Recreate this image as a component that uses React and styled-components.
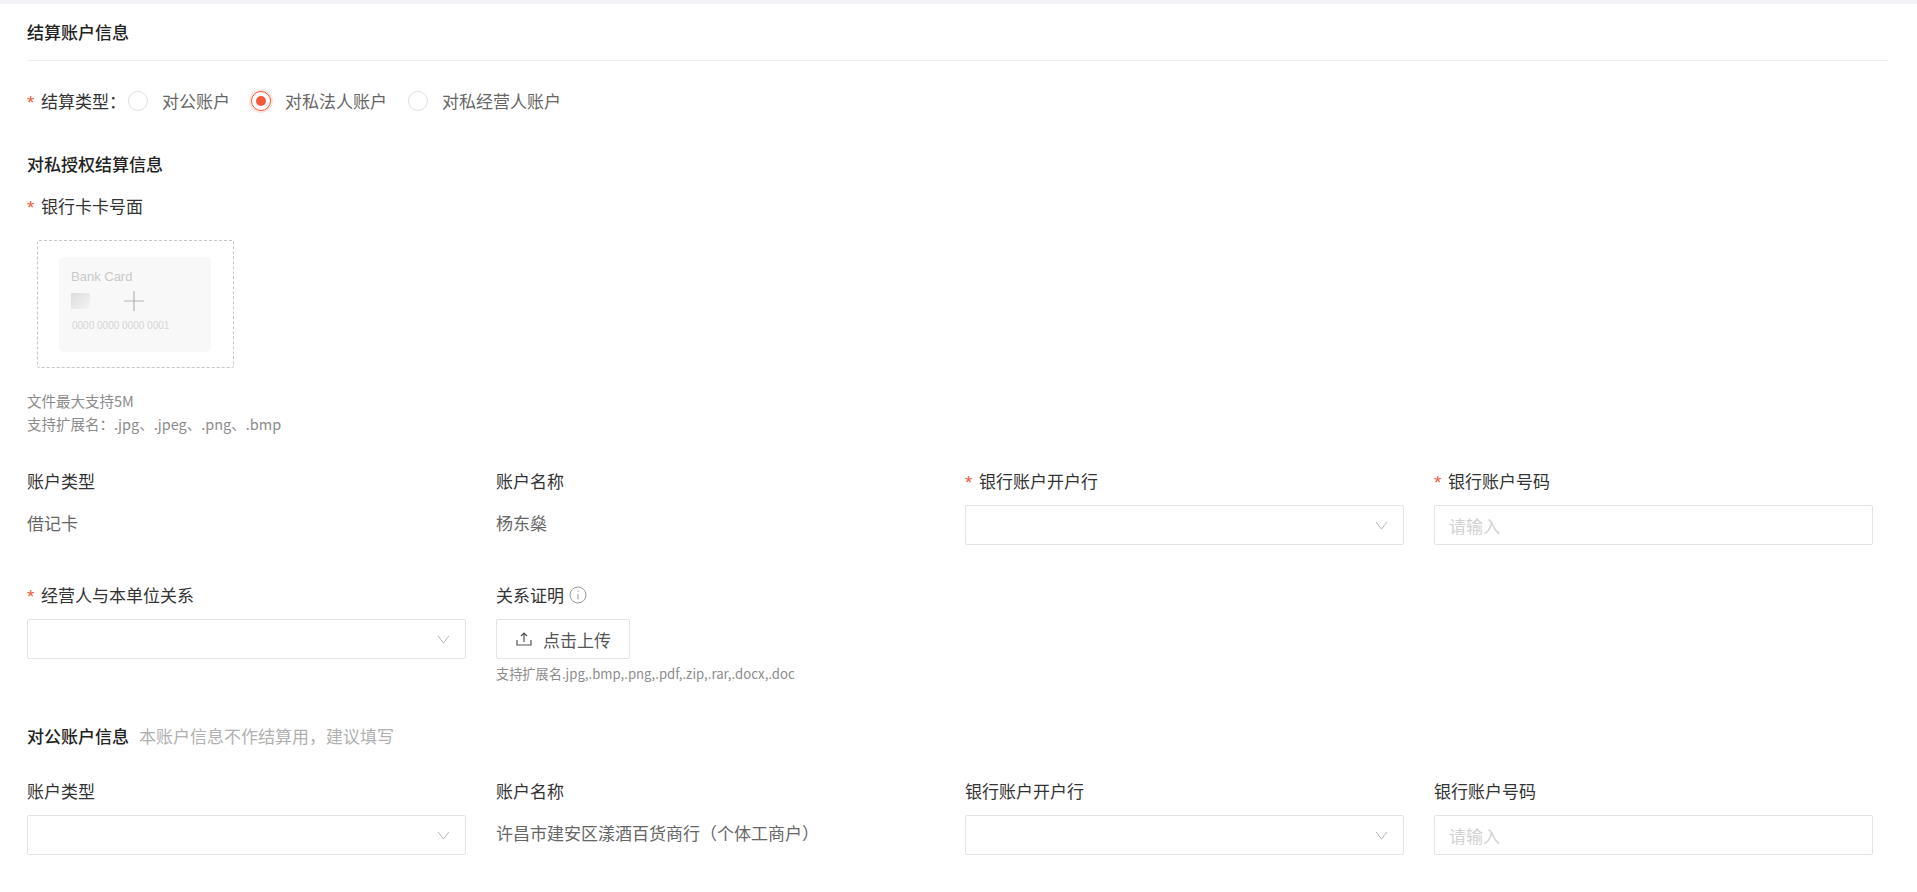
import React from "react";
import styled, { createGlobalStyle } from "styled-components";

const GlobalStyle = createGlobalStyle`
  html, body {
    margin: 0;
    padding: 0;
    background: #fff;
    font-family: "Noto Sans CJK SC", "Liberation Sans", sans-serif;
    color: #333;
  }
`;

const Chevron = () => (
  <ChevronSvg viewBox="0 0 14 10" fill="none" stroke="#b5b5b5" strokeWidth="1.1">
    <path d="M1 1l6 8 6-8" />
  </ChevronSvg>
);

const Field = ({ label, required, children }) => (
  <FieldBox>
    <Label>
      {required && <Star>*</Star>}
      {label}
    </Label>
    {children}
  </FieldBox>
);

const SelectBox = () => (
  <Select>
    <Chevron />
  </Select>
);

const Radio = ({ checked, children }) => (
  <RadioItem>
    <RadioDot $checked={checked} />
    <RadioText>{children}</RadioText>
  </RadioItem>
);

export default function App() {
  return (
    <>
      <GlobalStyle />
      <Page>
        <TopBand />
        <Content>
          <PanelTitle>结算账户信息</PanelTitle>

          <RadioRow>
            <RadioLabel as="div">
              <Star>*</Star>结算类型：
            </RadioLabel>
            <Radio>对公账户</Radio>
            <Radio checked>对私法人账户</Radio>
            <Radio>对私经营人账户</Radio>
          </RadioRow>

          <SubTitle>对私授权结算信息</SubTitle>
          <CardLabel>
            <Star>*</Star>银行卡卡号面
          </CardLabel>

          <UploadFrame>
            <BankCard>
              <CardName>Bank Card</CardName>
              <CardMiddle>
                <Chip />
                <PlusIcon viewBox="0 0 20 20" stroke="#b4b4b4" strokeWidth="1.2">
                  <path d="M0 10h20M10 0v20" />
                </PlusIcon>
              </CardMiddle>
              <CardNumber>0000 0000 0000 0001</CardNumber>
            </BankCard>
          </UploadFrame>

          <Hints>
            <Hint>文件最大支持5M</Hint>
            <Hint>支持扩展名：.jpg、.jpeg、.png、.bmp</Hint>
          </Hints>

          <FieldGrid $top={34}>
            <Field label="账户类型">
              <Value>借记卡</Value>
            </Field>
            <Field label="账户名称">
              <Value>杨东燊</Value>
            </Field>
            <Field label="银行账户开户行" required>
              <SelectBox />
            </Field>
            <Field label="银行账户号码" required>
              <Input placeholder="请输入" />
            </Field>
          </FieldGrid>

          <FieldGrid $top={38}>
            <Field label="经营人与本单位关系" required>
              <SelectBox />
            </Field>
            <FieldBox>
              <Label>
                关系证明
                <InfoIcon viewBox="0 0 18 18" fill="none" stroke="#9a9a9a" strokeWidth="1">
                  <circle cx="9" cy="9" r="8" />
                  <path d="M9 8v5.5M9 4.5v1.4" />
                </InfoIcon>
              </Label>
              <UploadButton>
                <UploadIcon viewBox="0 0 16 14" fill="none" stroke="#555" strokeWidth="1.2">
                  <path d="M1 8v5h14V8M8 10V1M5 4l3-3 3 3" />
                </UploadIcon>
                点击上传
              </UploadButton>
              <SmallHint>支持扩展名.jpg,.bmp,.png,.pdf,.zip,.rar,.docx,.doc</SmallHint>
            </FieldBox>
          </FieldGrid>

          <SectionHead>
            <SectionTitle>对公账户信息</SectionTitle>
            <SectionNote>本账户信息不作结算用，建议填写</SectionNote>
          </SectionHead>

          <FieldGrid $top={31}>
            <Field label="账户类型">
              <SelectBox />
            </Field>
            <Field label="账户名称">
              <Value>许昌市建安区漾酒百货商行（个体工商户）</Value>
            </Field>
            <Field label="银行账户开户行">
              <SelectBox />
            </Field>
            <Field label="银行账户号码">
              <Input placeholder="请输入" />
            </Field>
          </FieldGrid>
        </Content>
      </Page>
    </>
  );
}

const Page = styled.div`
  width: 100%;
  height: 892px;
  overflow: hidden;
  background: #fff;
`;

const TopBand = styled.div`
  height: 4px;
  background: #f0f2f5;
`;

const Content = styled.div`
  padding: 0 44px 0 27px;
`;

const PanelTitle = styled.div`
  height: 56px;
  margin-right: -15px;
  line-height: 56px;
  font-size: 17px;
  font-weight: 500;
  color: #222;
  border-bottom: 1px solid #eeeeee;
`;

const RadioRow = styled.div`
  display: flex;
  align-items: center;
  height: 24px;
  margin-top: 28px;
`;

const RadioItem = styled.div`
  display: flex;
  align-items: center;
  margin-right: 21px;
`;

const RadioDot = styled.span`
  position: relative;
  width: 20px;
  height: 20px;
  box-sizing: border-box;
  border-radius: 50%;
  border: 1px solid ${(p) => (p.$checked ? "#f4593c" : "#dddddd")};
  box-shadow: ${(p) => (p.$checked ? "0 0 0 2px #fde6e1" : "none")};
  background: #fff;

  &::after {
    content: "";
    display: ${(p) => (p.$checked ? "block" : "none")};
    position: absolute;
    top: 4px;
    left: 4px;
    width: 10px;
    height: 10px;
    border-radius: 50%;
    background: #f4593c;
  }
`;

const RadioText = styled.span`
  margin-left: 14px;
  font-size: 17px;
  line-height: 24px;
  color: #666;
`;

const SubTitle = styled.div`
  margin-top: 39px;
  font-size: 17px;
  line-height: 24px;
  font-weight: 500;
  color: #222;
`;

const Label = styled.label`
  display: flex;
  align-items: center;
  height: 24px;
  font-size: 17px;
  line-height: 24px;
  color: #333;
  white-space: nowrap;
`;

const RadioLabel = styled(Label)`
  margin-right: 2px;
`;

const CardLabel = styled(Label)`
  margin-top: 18px;
`;

const Star = styled.span`
  width: 14px;
  padding-top: 3px;
  font-family: "Liberation Sans", sans-serif;
  color: #f4593c;
  font-size: 19px;
  line-height: 24px;
`;

const UploadFrame = styled.div`
  width: 197px;
  height: 128px;
  margin: 22px 0 0 10px;
  box-sizing: border-box;
  border: 1px dashed #c8c8c8;
  border-radius: 2px;
  padding: 16px 21px;
`;

const BankCard = styled.div`
  width: 152px;
  height: 95px;
  box-sizing: border-box;
  padding: 12px 12px 0;
  background: #f8f8f8;
  border-radius: 5px;
`;

const CardName = styled.div`
  font-family: "Liberation Sans", sans-serif;
  font-size: 13px;
  line-height: 16px;
  color: #c9c9c9;
`;

const CardMiddle = styled.div`
  display: flex;
  align-items: center;
  height: 26px;
  margin-top: 3px;
`;

const Chip = styled.div`
  width: 19px;
  height: 16px;
  background: linear-gradient(135deg, #dcdcdc, #f5f5f5);
`;

const PlusIcon = styled.svg`
  width: 20px;
  height: 20px;
  margin-left: 34px;
`;

const CardNumber = styled.div`
  margin: 5px 0 0 1px;
  font-family: "Liberation Sans", sans-serif;
  font-size: 10px;
  line-height: 14px;
  color: #d4d4d4;
  white-space: nowrap;
`;

const Hints = styled.div`
  margin-top: 21px;
`;

const Hint = styled.div`
  font-size: 14.5px;
  line-height: 23px;
  color: #8c8c8c;
`;

const FieldGrid = styled.div`
  display: grid;
  grid-template-columns: repeat(4, 439px);
  column-gap: 30px;
  margin-top: ${(p) => p.$top}px;
`;

const FieldBox = styled.div`
  display: flex;
  flex-direction: column;
  min-width: 0;
`;

const Value = styled.div`
  margin-top: 18px;
  height: 34px;
  line-height: 24px;
  font-size: 17px;
  color: #666;
  white-space: nowrap;
`;

const Select = styled.div`
  display: flex;
  align-items: center;
  justify-content: flex-end;
  height: 40px;
  margin-top: 12px;
  padding-right: 15px;
  box-sizing: border-box;
  background: #fff;
  border: 1px solid #e3e3e3;
  border-radius: 2px;
`;

const ChevronSvg = styled.svg`
  width: 13px;
  height: 9px;
`;

const Input = styled.input`
  display: block;
  width: 100%;
  height: 40px;
  margin-top: 12px;
  padding: 0 14px;
  box-sizing: border-box;
  font-family: inherit;
  font-size: 17px;
  color: #333;
  border: 1px solid #e3e3e3;
  border-radius: 2px;
  outline: none;

  &::placeholder {
    color: #d2d2d2;
  }
`;

const InfoIcon = styled.svg`
  width: 18px;
  height: 18px;
  margin-left: 5px;
`;

const UploadButton = styled.div`
  display: flex;
  align-items: center;
  width: 134px;
  height: 40px;
  margin-top: 12px;
  padding-left: 19px;
  box-sizing: border-box;
  font-size: 17px;
  color: #555;
  background: #fff;
  border: 1px solid #e3e3e3;
  border-radius: 2px;
`;

const UploadIcon = styled.svg`
  width: 16px;
  height: 14px;
  margin-right: 11px;
`;

const SmallHint = styled.div`
  margin-top: 5px;
  font-size: 13.2px;
  line-height: 20px;
  color: #8c8c8c;
  white-space: nowrap;
`;

const SectionHead = styled.div`
  display: flex;
  align-items: center;
  height: 24px;
  margin-top: 40px;
`;

const SectionTitle = styled.span`
  font-size: 17px;
  line-height: 24px;
  font-weight: 500;
  color: #222;
`;

const SectionNote = styled.span`
  margin-left: 10px;
  font-size: 17px;
  line-height: 24px;
  color: #b0b0b0;
`;
